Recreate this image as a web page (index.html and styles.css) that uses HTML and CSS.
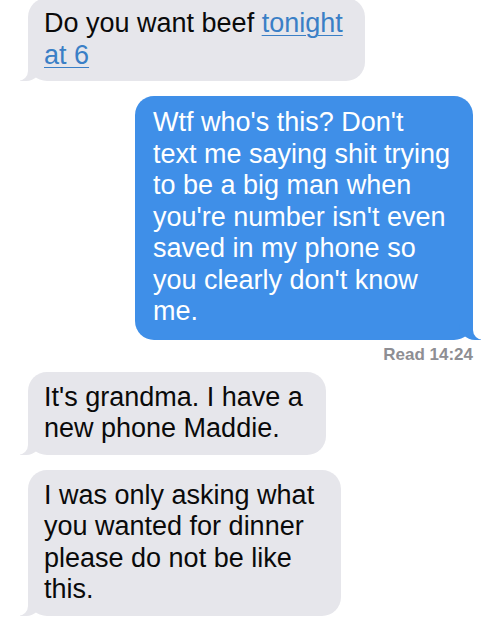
FILE: index.html
```html
<!DOCTYPE html>
<html>
<head>
<meta charset="utf-8">
<link rel="stylesheet" href="styles.css">
</head>
<body>
<div class="thread">
  <div class="bubble in b1">Do you want beef <span class="link">tonight</span><br><span class="link">at 6</span></div>
  <div class="bubble out b2">Wtf who's this? Don't<br>text me saying shit trying<br>to be a big man when<br>you're number isn't even<br>saved in my phone so<br>you clearly don't know<br>me.</div>
  <div class="status">Read 14:24</div>
  <div class="bubble in b3">It's grandma. I have a<br>new phone Maddie.</div>
  <div class="bubble in b4">I was only asking what<br>you wanted for dinner<br>please do not be like<br>this.</div>
</div>
</body>
</html>
```
FILE: styles.css
```css
html, body {
  margin: 0;
  padding: 0;
  background: #ffffff;
  width: 500px;
  height: 636px;
  overflow: hidden;
}
.thread {
  display: flex;
  flex-direction: column;
  font-family: "Liberation Sans", Arial, sans-serif;
  font-size: 27px;
  line-height: 31.5px;
}
.bubble {
  position: relative;
  border-radius: 19px;
  padding: 10px 16px 10px 16px;
  box-sizing: border-box;
}
.in {
  background: #e6e6eb;
  color: #0a0a0a;
  margin-left: 28px;
}
.out {
  background: #3f8fe8;
  color: #ffffff;
  align-self: flex-end;
  margin-right: 27px;
  padding: 11px 16px 12px 18px;
}
.in::before {
  content: "";
  position: absolute;
  bottom: 0;
  left: -8px;
  width: 22px;
  height: 20px;
  background: #e6e6eb;
  border-bottom-right-radius: 16px;
}
.in::after {
  content: "";
  position: absolute;
  bottom: 0;
  left: -11px;
  width: 11px;
  height: 20px;
  background: #ffffff;
  border-bottom-right-radius: 10px;
}
.out::before {
  content: "";
  position: absolute;
  bottom: 0;
  right: -8px;
  width: 22px;
  height: 20px;
  background: #3f8fe8;
  border-bottom-left-radius: 16px;
}
.out::after {
  content: "";
  position: absolute;
  bottom: 0;
  right: -11px;
  width: 11px;
  height: 20px;
  background: #ffffff;
  border-bottom-left-radius: 10px;
}
.link {
  color: #3a7fc6;
  text-decoration: underline;
  text-underline-offset: 3px;
  text-decoration-thickness: 1px;
}
.b1 {
  margin-top: -2px;
  width: 337px;
}
.b2 {
  margin-top: 15px;
  width: 338px;
}
.status {
  align-self: flex-end;
  margin-right: 27px;
  margin-top: 5px;
  font-size: 17px;
  line-height: 20px;
  font-weight: bold;
  color: #8e8e93;
}
.b3 {
  margin-top: 7px;
  width: 298px;
}
.b4 {
  margin-top: 15px;
  width: 313px;
}
```
